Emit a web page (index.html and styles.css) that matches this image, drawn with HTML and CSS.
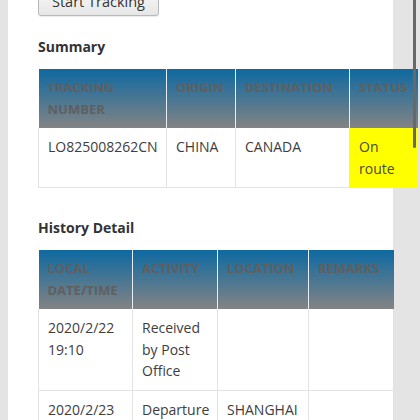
FILE: index.html
```html
<!DOCTYPE html>
<html lang="en">
<head>
<meta charset="utf-8">
<title>Tracking</title>
<link rel="stylesheet" href="styles.css">
</head>
<body>
<div class="panel">
  <div class="actions"><button class="btn" type="button">Start Tracking</button></div>
  <h2 class="heading heading-summary">Summary</h2>
  <table class="grid grid-summary">
    <colgroup><col class="c1"><col class="c2"><col class="c3"><col class="c4"></colgroup>
    <thead>
      <tr><th>Tracking Number</th><th>Origin</th><th>Destination</th><th>Status</th></tr>
    </thead>
    <tbody>
      <tr><td>LO825008262CN</td><td>CHINA</td><td>CANADA</td><td class="status">On route</td></tr>
    </tbody>
  </table>
  <h2 class="heading heading-history">History Detail</h2>
  <table class="grid grid-history">
    <colgroup><col class="h1"><col class="h2"><col class="h3"><col class="h4"></colgroup>
    <thead>
      <tr><th>Local Date/Time</th><th>Activity</th><th>Location</th><th>Remarks</th></tr>
    </thead>
    <tbody>
      <tr><td>2020/2/22 19:10</td><td>Received by Post Office</td><td></td><td></td></tr>
      <tr><td>2020/2/23</td><td>Departure</td><td>SHANGHAI</td><td></td></tr>
    </tbody>
  </table>
</div>
<div class="scroll-thumb"></div>
</body>
</html>
```
FILE: styles.css
```css
html, body {
  margin: 0;
  padding: 0;
  height: 100%;
  overflow: hidden;
}
body {
  background: #e4e4e4;
  font-family: "Open Sans", "Noto Sans", sans-serif;
  color: #3a3a3a;
}
.panel {
  margin-left: 8px;
  width: 385px;
  min-height: 440px;
  background: #ffffff;
  padding-left: 30px;
  box-sizing: border-box;
}
.actions {
  margin-top: -14px;
  height: 30px;
}
.btn {
  height: 30px;
  width: 121px;
  padding: 0;
  font-family: "Open Sans", "Noto Sans", sans-serif;
  font-size: 14.5px;
  color: #333;
  background: linear-gradient(#fafafa, #e6e6e6);
  border: 1px solid #b9b9b9;
  border-radius: 3px;
  box-shadow: 0 1px 1px rgba(0,0,0,0.08);
}
.heading {
  margin: 0 0 12px;
  font-size: 14px;
  line-height: 20px;
  font-weight: 700;
  color: #333;
}
.heading-summary { margin-top: 21px; }
.heading-history { margin-top: 30px; }
.grid {
  border-collapse: collapse;
  table-layout: fixed;
  font-size: 14px;
  line-height: 21.5px;
}
.grid-summary { width: 379px; }
.grid-history { width: 355px; }
.c1 { width: 128px; }
.c2 { width: 69px; }
.c3 { width: 114px; }
.c4 { width: 68px; }
.h1 { width: 94px; }
.h2 { width: 85px; }
.h3 { width: 91px; }
.h4 { width: 85px; }
.grid th {
  background: linear-gradient(#0e69a1, #838383);
  color: #5f5f5f;
  font-size: 13px;
  font-weight: 700;
  text-transform: uppercase;
  text-align: left;
  vertical-align: top;
  padding: 8px 8px 8px 9px;
  border-left: 1px solid #e8eef3;
  overflow: hidden;
  white-space: normal;
}
.grid th:first-child { border-left: 0; }
.grid td {
  padding: 8px 8px 8px 9px;
  vertical-align: top;
  border: 1px solid #e3e3e3;
  border-top: 0;
  color: #3d3d3d;
}
.grid td.status {
  background: #ffff00;
  color: #4a4a3a;
}
.scroll-thumb {
  position: fixed;
  top: 0;
  right: 4px;
  width: 3px;
  height: 148px;
  background: #686868;
  border-radius: 0 0 2px 2px;
}
```
